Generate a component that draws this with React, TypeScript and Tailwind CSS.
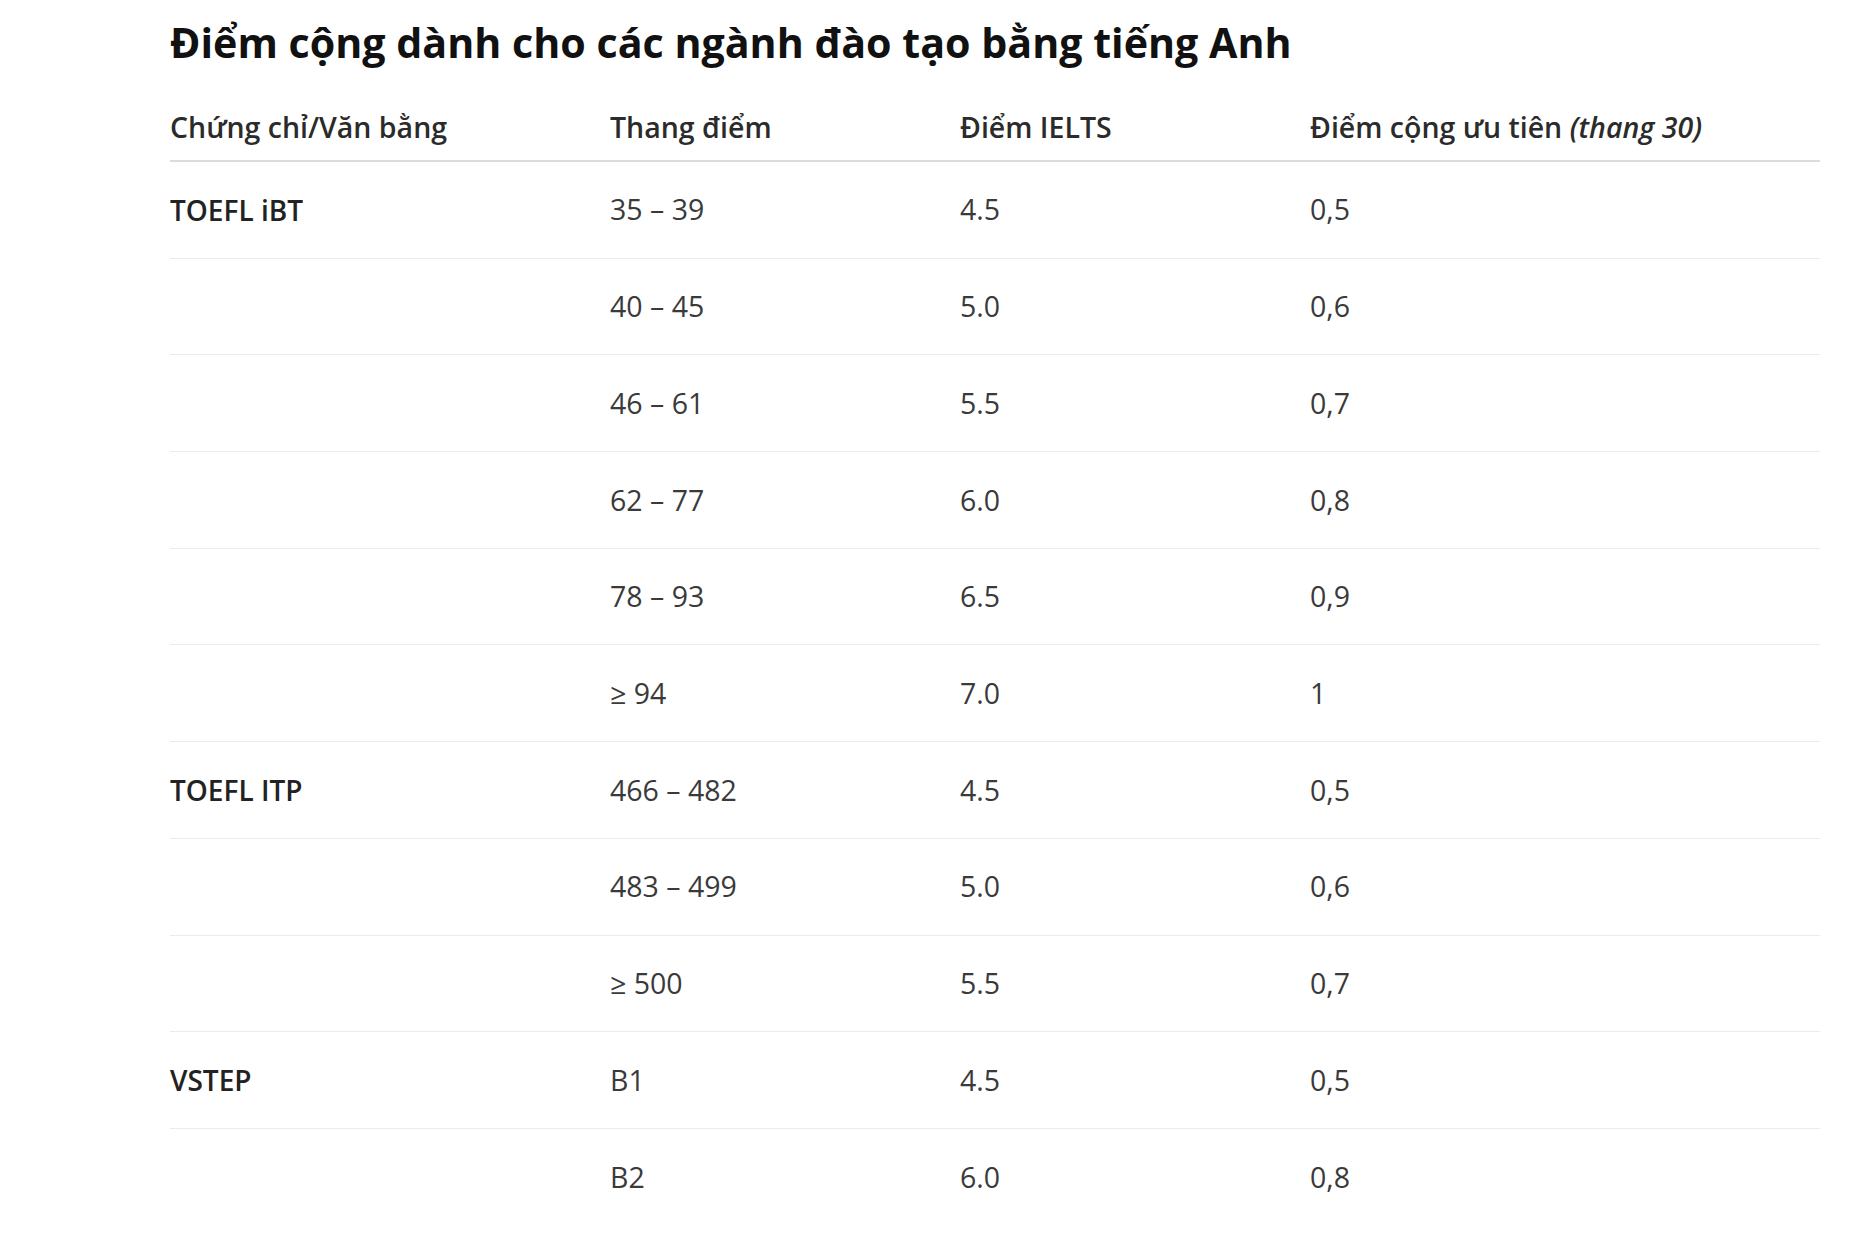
import React from "react";

const rows: [string, string, string, string][] = [
  ["TOEFL iBT", "35 – 39", "4.5", "0,5"],
  ["", "40 – 45", "5.0", "0,6"],
  ["", "46 – 61", "5.5", "0,7"],
  ["", "62 – 77", "6.0", "0,8"],
  ["", "78 – 93", "6.5", "0,9"],
  ["", "≥ 94", "7.0", "1"],
  ["TOEFL ITP", "466 – 482", "4.5", "0,5"],
  ["", "483 – 499", "5.0", "0,6"],
  ["", "≥ 500", "5.5", "0,7"],
  ["VSTEP", "B1", "4.5", "0,5"],
  ["", "B2", "6.0", "0,8"],
];

export default function App() {
  return (
    <div
      className="min-h-[1247px] w-[1870px] bg-white pl-[170px] pt-[14px]"
      style={{ fontFamily: '"Open Sans", "Noto Sans", sans-serif' }}
    >
      <h2 className="text-[41.2px] font-bold leading-[56px] text-[#111]">
        Điểm cộng dành cho các ngành đào tạo bằng tiếng Anh
      </h2>
      <div className="mt-[24px] w-[1650px]">
        <div className="grid h-[68px] grid-cols-[440px_350px_350px_510px] items-center border-b-2 border-[#dcdcdc] text-[28.5px] font-semibold text-[#2b2b2b]">
          <div>Chứng chỉ/Văn bằng</div>
          <div>Thang điểm</div>
          <div>Điểm IELTS</div>
          <div>
            Điểm cộng ưu tiên <span className="italic">(thang 30)</span>
          </div>
        </div>
        {rows.map((r, i) => (
          <div
            key={i}
            className={
              "grid h-[96.7px] grid-cols-[440px_350px_350px_510px] items-center text-[28.5px] text-[#3a3a3a] " +
              (i < rows.length - 1 ? "border-b border-[#ebebeb]" : "")
            }
          >
            <div className="text-[28px] font-semibold text-[#222]">{r[0]}</div>
            <div>{r[1]}</div>
            <div>{r[2]}</div>
            <div>{r[3]}</div>
          </div>
        ))}
      </div>
    </div>
  );
}
